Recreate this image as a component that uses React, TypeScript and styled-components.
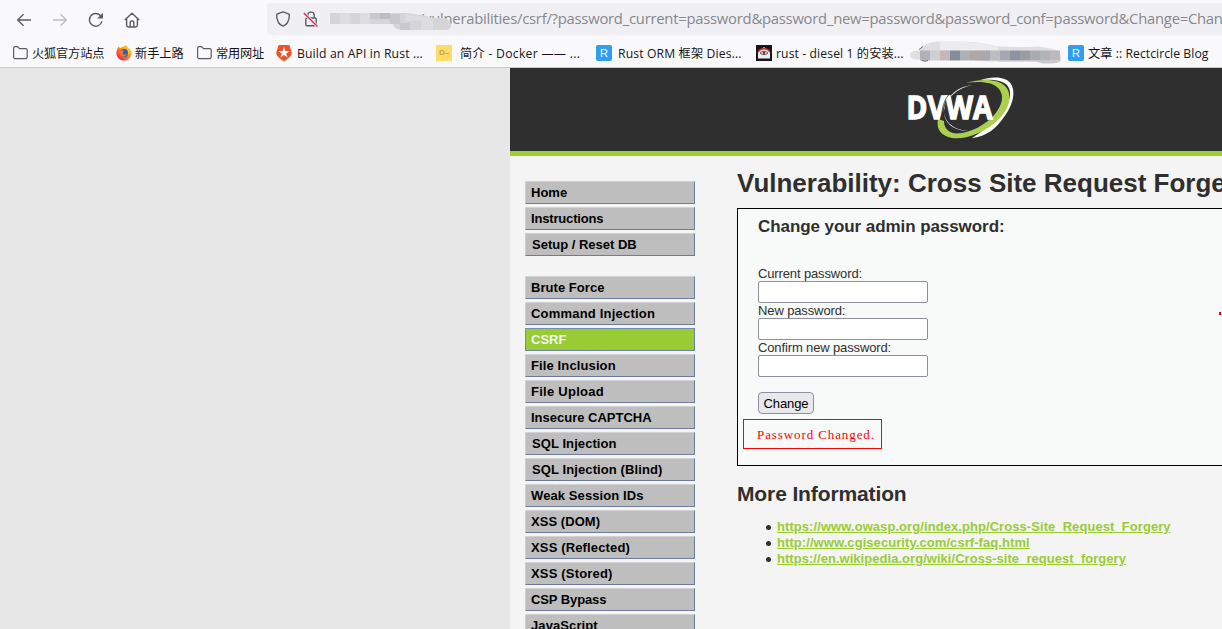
import React from "react";
import styled, { createGlobalStyle } from "styled-components";

const GlobalStyle = createGlobalStyle`
  *, *::before, *::after { box-sizing: border-box; }
  html, body { margin: 0; padding: 0; overflow: hidden; }
  body { font-family: "Liberation Sans", Arial, sans-serif; font-size: 13px; color: #2f2f2f; background: #e7e7e7; }
`;

const Window = styled.div`
  width: 1222px;
  height: 629px;
  display: flex;
  flex-direction: column;
  overflow: hidden;
`;

const Chrome = styled.header`
  height: 68px;
  flex: none;
  background: #f9f9fb;
  border-bottom: 1px solid #cccccf;
`;

const Toolbar = styled.div`
  height: 38px;
  display: flex;
  align-items: center;
`;

const NavIcons = styled.div`
  width: 267px;
  flex: none;
  display: flex;
  align-items: center;
  gap: 20px;
  padding: 1px 0 0 16px;
`;

const AddressBar = styled.div`
  flex: 1;
  height: 32px;
  display: flex;
  align-items: center;
  padding-left: 8px;
  gap: 12px;
  background: #f0f0f4;
  border-radius: 4px 0 0 4px;
  overflow: hidden;
`;

const Address = styled.div`
  position: relative;
  display: flex;
  padding: 0 0 2px 81px;
  font: 14.8px/20px "Open Sans", "Noto Sans", sans-serif;
  letter-spacing: -0.235px;
  color: #87878c;
  white-space: nowrap;
`;

const AddressMask = styled.svg`
  position: absolute;
  left: -4px;
  top: 1px;
`;

const Bookmarks = styled.nav`
  display: flex;
  height: 29px;
  padding-left: 12px;
`;

const Bookmark = styled.div<{ $width: number; $gap: number }>`
  width: ${(p) => p.$width}px;
  flex: none;
  display: flex;
  align-items: center;
  gap: ${(p) => p.$gap}px;
`;

const BookmarkLabel = styled.span<{ $spacing: number }>`
  padding-top: 2px;
  font: 12.2px/18px "Open Sans", "Noto Sans CJK SC", sans-serif;
  letter-spacing: ${(p) => p.$spacing}px;
  color: #15141a;
  white-space: nowrap;
`;

const LetterBadge = styled.span<{ $bg: string; $fg: string; $size: number; $radius: number }>`
  width: 16px;
  height: 16px;
  flex: none;
  display: flex;
  align-items: center;
  justify-content: center;
  border-radius: ${(p) => p.$radius}px;
  background: ${(p) => p.$bg};
  color: ${(p) => p.$fg};
  font-size: ${(p) => p.$size}px;
  line-height: 16px;
`;

const Icon = styled.svg`
  display: block;
  flex: none;
`;

const Page = styled.div`
  flex: 1;
  min-height: 0;
  margin-left: 510px;
  display: flex;
  flex-direction: column;
  background: #f4f4f4;
  overflow: hidden;
`;

const Banner = styled.div`
  height: 88px;
  flex: none;
  padding: 8px 0 0 396px;
  background: #2f2f2f;
  border-bottom: 5px solid #a1cc33;
`;

const Columns = styled.div`
  display: flex;
  flex: 1;
  min-height: 0;
`;

const Sidebar = styled.aside`
  width: 227px;
  flex: none;
  padding: 25px 0 0 15px;
  display: flex;
  flex-direction: column;
  gap: 20px;
`;

const MenuGroup = styled.ul`
  margin: 0;
  padding: 0;
  list-style: none;
  display: flex;
  flex-direction: column;
  gap: 3px;
`;

const MenuItem = styled.li<{ $active: boolean; $indent: number; $spacing: number }>`
  width: 170px;
  height: 23px;
  padding-left: ${(p) => 5 + p.$indent}px;
  border: 1px solid;
  border-color: ${(p) => (p.$active ? "#6f8fb4 #6b82a4 #6b82a4 #6f8fb4" : "#d2d2d2 #6e7c9a #6e7c9a #cfcfcf")};
  background: ${(p) => (p.$active ? "#99cc33" : "#bebebe")};
  color: ${(p) => (p.$active ? "#f4f4f4" : "#000")};
  font-weight: bold;
  font-size: 13px;
  line-height: 21px;
  letter-spacing: ${(p) => p.$spacing}px;
  white-space: nowrap;
`;

const Main = styled.main`
  width: 700px;
  flex: none;
`;

const Title = styled.h1`
  margin: 11px 0 0;
  height: 41px;
  font-size: 26px;
  line-height: 32px;
  white-space: nowrap;
`;

const Panel = styled.section`
  height: 258px;
  border: 1px solid #000;
  background: #f8faf9;
  padding: 8px 0 0 5px;
`;

const PanelBody = styled.div`
  position: relative;
`;

const Form = styled.form`
  padding-left: 15px;
  display: flex;
  flex-direction: column;
  align-items: flex-start;
`;

const PanelTitle = styled.h3`
  margin: 0 0 29px;
  font-size: 17px;
  line-height: 20px;
  letter-spacing: -0.07px;
`;

const FieldLabel = styled.label<{ $spacing: number }>`
  height: 15px;
  font-size: 13px;
  line-height: 15px;
  letter-spacing: ${(p) => p.$spacing}px;
`;

const Field = styled.input`
  display: block;
  width: 170px;
  height: 22px;
  padding: 0 4px;
  border: 1px solid #8f8f9d;
  border-radius: 2px;
  background: #fff;
`;

const SubmitButton = styled.button`
  margin-top: 15px;
  width: 56px;
  height: 22px;
  padding: 1px 0 0;
  border: 1px solid #8f8f9d;
  border-radius: 4px;
  background: #e9e9ed;
  color: #000;
  font: 13px/19px "Liberation Sans", Arial, sans-serif;
  letter-spacing: -0.1px;
`;

const Notice = styled.div`
  width: 139px;
  height: 30px;
  margin-top: 5px;
  padding-left: 13px;
  border: 1px solid #f00;
  color: #f00;
  font: 13px/30px "Liberation Serif", serif;
  letter-spacing: 0.9px;
  white-space: nowrap;
`;

const RedMark = styled.span`
  position: absolute;
  left: 476px;
  top: 95px;
  width: 2px;
  height: 3px;
  background: #f00000;
`;

const Subtitle = styled.h2`
  margin: 15px 0 12px;
  font-size: 21px;
  line-height: 26px;
  letter-spacing: -0.12px;
`;

const Links = styled.ul`
  margin: 0;
  padding: 0 0 0 29px;
  list-style: none;
  font-size: 13px;
  line-height: 16px;
`;

const LinkRow = styled.li`
  display: flex;
  align-items: center;
  gap: 6px;
  &::before {
    content: "";
    width: 5px;
    height: 5px;
    border-radius: 50%;
    background: #2f2f2f;
  }
`;

const Link = styled.a<{ $spacing: number }>`
  color: #99cc33;
  font-weight: bold;
  letter-spacing: ${(p) => p.$spacing}px;
  text-decoration: underline;
`;

const Folder = () => (
  <Icon width="16" height="16" viewBox="0 0 16 16" fill="none" stroke="#5b5b66" strokeWidth="1.2">
    <path d="M1.6 12V3.2Q1.6 1.7 3.1 1.7H5.6L7.6 3.6H13.6Q15.2 3.6 15.2 5.1V12Q15.2 13.6 13.6 13.6H3.1Q1.6 13.6 1.6 12Z" />
  </Icon>
);

const Firefox = () => (
  <Icon width="16" height="16" viewBox="0 0 16 16">
    <defs>
      <linearGradient id="fox" x1="1" y1="0" x2="0.15" y2="1">
        <stop offset="0" stopColor="#ffdc35" />
        <stop offset=".42" stopColor="#ff9a20" />
        <stop offset=".75" stopColor="#ff4a32" />
        <stop offset="1" stopColor="#ed1769" />
      </linearGradient>
    </defs>
    <path fill="url(#fox)" d="M1.8 3 3 1.3 3.6 3 5.5 2.4 7.3 1.6 9.8.3C10.5 2 13.2 2.8 14.7 5.3 16.8 10 13.4 15.6 8 15.6 3.6 15.6.4 12.2.4 8.2.4 6 1 4.4 1.8 3Z" />
    <circle cx="8.2" cy="8" r="4.1" fill="#2662b8" />
    <path fill="#ff7527" d="M3 5.8 6.3 5.3 8 6.6 6.6 8.2C7 10.5 9.4 9.5 10.7 9.1 9.5 12.4 5.5 12.6 3.7 9.5Z" />
    <path fill="#ffc22d" d="M9.8.3C9 2.6 13.7 5.4 11.4 10.2 16 8 14.6 4.3 9.8.3Z" />
  </Icon>
);

const Shield = () => (
  <Icon width="16" height="18" viewBox="0 0 16 18">
    <path fill="#eb5424" d="M2.7 1H13.3L15.7 8.2C16 12.3 11.5 15 8 17.2 4.5 15 0 12.3.3 8.2Z" />
    <path fill="#f9f9fb" d="M8 2.8 9.3 6.9H13.6L10.2 9.4 11.5 13.4 8 11 4.5 13.4 5.8 9.4 2.4 6.9H6.7Z" />
  </Icon>
);

const EyeMail = () => (
  <Icon width="16" height="16" viewBox="0 0 16 16">
    <rect width="16" height="16" fill="#17161b" />
    <path fill="#ececec" d="M2 7 8 2 14 7V13.5H2Z" />
    <path fill="none" stroke="#d02a29" strokeWidth="1.5" d="M2 7.3C4 2.4 12 2.4 14 7.3" />
    <path fill="#fff" stroke="#3b2c2c" strokeWidth=".8" d="M4 8Q8 4.2 12 8 8 11.2 4 8Z" />
    <circle cx="8" cy="7.8" r="1.4" fill="#a92525" />
  </Icon>
);

const MASK_COLORS = ["#c4b7b8", "#858c9a", "#adb0b6", "#afa7a8", "#a9a9ab", "#bdbdc3", "#a6a8b1", "#8f93a0", "#9b9ba2", "#a9acb1", "#b2b3b8", "#bdb9bb"];

const HiddenBookmark = () => (
  <Icon width="152" height="24" viewBox="0 0 152 24">
    <g transform="translate(0 -1.5)">
      <path fill="#dfdfe2" d="M10 10Q17 2 29 2L53 2C66 2 78 5 88 7Q108 8 130 7L145 10Q152 12 151 22H88Q69 22 60 20H8Q0 20 0 15 0 11 10 11Z" />
      <path fill="#ececef" d="M30 2H54C66 3 78 5 88 7.500V11H30Z" />
      <rect x="20" y="11" width="10" height="10" fill="#cfced4" />
      {MASK_COLORS.map((color, i) => (
        <rect key={i} x={30 + i * 10} y="11" width="10" height="10" fill={color} />
      ))}
      <rect x="10" y="11" width="10" height="10" fill="#b2b1ba" />
      <path fill="#c9c8ce" d="M88 21H150Q149 24 142 24H132L126 22H88Z" />
      <path fill="none" stroke="#44434a" strokeWidth=".8" d="M9 10 13 7M12 21Q15 22.500 18 21" />
    </g>
  </Icon>
);

const Logo = () => (
  <Icon width="110" height="64" viewBox="0 0 110 64">
    <path fill="#fff" d="M74 4C88-.5 101 1 105 8 110 16 107 29 98 41 90 53 79 61 66 62 76 56 88 46 97 35 105 24 106 15 101 9 96 4 87 3 74 4Z" />
    <path fill="#aad04d" d="M60 7C76 2 94 3 100 11 107 20 103 33 93 43 80 56 60 64 46 62 35 60 30 53 32 43L38 45C38 53 43 57 51 57.500 64 57 80 49 89 38 97 28 98 19 93 13 87 6 75 5 60 7Z" />
    <path fill="#fff" d="M66 9C51 12 41 22 38 32 36.500 44 46 54 63 55 48 55 38 47 38 36 39 22 50 11 66 9Z" />
    <g fill="#fff" stroke="#fff" strokeWidth="1.4" fontFamily="Open Sans, sans-serif" fontWeight="700" fontSize="32.500">
      <text x="0.5" y="43" textLength="86" lengthAdjust="spacingAndGlyphs">DVWA</text>
    </g>
    <path fill="none" stroke="#2f2f2f" strokeWidth=".7" d="M42.500 19C38 25 35.500 32 36 41" />
  </Icon>
);

type Item = { label: string; spacing?: number; indent?: number; active?: boolean };

const GROUPS: Item[][] = [
  [{ label: "Home" }, { label: "Instructions", spacing: -0.17 }, { label: "Setup / Reset DB", indent: 1 }],
  [
    { label: "Brute Force", spacing: 0.05 },
    { label: "Command Injection", spacing: 0.2 },
    { label: "CSRF", active: true },
    { label: "File Inclusion", spacing: 0.12 },
    { label: "File Upload", spacing: 0.26 },
    { label: "Insecure CAPTCHA" },
    { label: "SQL Injection", indent: 1, spacing: 0.08 },
    { label: "SQL Injection (Blind)", indent: 1, spacing: 0.1 },
    { label: "Weak Session IDs", spacing: 0.1 },
    { label: "XSS (DOM)", spacing: 0.05 },
    { label: "XSS (Reflected)", spacing: 0.15 },
    { label: "XSS (Stored)", spacing: 0.17 },
    { label: "CSP Bypass", spacing: -0.1 },
    { label: "JavaScript", spacing: 0.1 },
  ],
];

const BOOKMARKS: { icon: React.ReactNode; label: string; width: number; gap: number; spacing: number }[] = [
  { icon: <Folder />, label: "火狐官方站点", width: 104, gap: 4, spacing: -0.15 },
  { icon: <Firefox />, label: "新手上路", width: 80, gap: 3, spacing: 0 },
  { icon: <Folder />, label: "常用网址", width: 80, gap: 4, spacing: -0.15 },
  { icon: <Shield />, label: "Build an API in Rust ...", width: 160, gap: 5, spacing: 0.13 },
  { icon: <LetterBadge $bg="#ffdc67" $fg="#a48b36" $size={8} $radius={0}>D–</LetterBadge>, label: "简介 - Docker —— ...", width: 160, gap: 8, spacing: 0.28 },
  { icon: <LetterBadge $bg="#309df1" $fg="#fff" $size={11} $radius={2}>R</LetterBadge>, label: "Rust ORM 框架 Dies...", width: 160, gap: 6, spacing: 0.13 },
  { icon: <EyeMail />, label: "rust - diesel 1 的安装...", width: 154, gap: 4, spacing: 0.1 },
];

export default function App() {
  return (
    <Window>
      <GlobalStyle />
      <Chrome>
        <Toolbar>
          <NavIcons>
            <Icon width="16" height="16" viewBox="0 0 16 16" fill="none" stroke="#5b5b66" strokeWidth="1.4"><path d="M15 8H1.7M7.5 2.2 1.7 8 7.5 13.8" /></Icon>
            <Icon width="16" height="16" viewBox="0 0 16 16" fill="none" stroke="#bdbdc3" strokeWidth="1.4"><path d="M1 8H14.3M8.5 2.2 14.3 8 8.5 13.8" /></Icon>
            <Icon width="16" height="16" viewBox="0 0 16 16" fill="none" stroke="#5b5b66" strokeWidth="1.4"><path d="M13.8 9.3A6.3 6.3 0 1 1 12.8 4.2" /><path fill="#5b5b66" stroke="none" d="M9.2 6.5H15V.7Z" /></Icon>
            <Icon width="16" height="16" viewBox="0 0 16 16" fill="none" stroke="#5b5b66" strokeWidth="1.4" strokeLinejoin="round"><path d="M.8 8 8 1.2 15.2 8M2.6 6.5V13.3Q2.6 15 4.3 15H11.7Q13.4 15 13.4 13.3V6.5M6.2 15V10.5Q6.2 9 8 9T9.8 10.5V15" /></Icon>
          </NavIcons>
          <AddressBar>
            <Icon width="16" height="16" viewBox="0 0 16 16" fill="none" stroke="#5b5b66" strokeWidth="1.4"><path strokeLinejoin="round" d="M8 .9 14.2 3.2Q15 7.5 12.6 11.5 11 14 8 15.2 5 14 3.4 11.5 1 7.5 1.8 3.2Z" /></Icon>
            <Icon width="16" height="16" viewBox="0 0 16 16" fill="none" stroke="#5b5b66" strokeWidth="1.4"><rect x="2.8" y="7" width="10.4" height="7.8" rx="1.2" /><path d="M4.8 7V4.2Q4.8 1.1 8 1.1T11.2 4.2V7" /><path stroke="#f0f0f4" strokeWidth="3" d="M.8 2 14.5 15.5" /><path stroke="#e22850" d="M.8 2 14.5 15.5" /></Icon>
            <Address>
              <span>s/vulnerabilities/csrf/?password_current=password&amp;password_new=password&amp;password_conf=password&amp;Change=Chan</span>
              <AddressMask width="124" height="24" viewBox="0 0 124 24">
                <path fill="#d5d4d9" d="M3 4H80L94 6 108 9H118Q124 11 124 16 124 21 118 21H76Q67 21 66 15H3Z" />
                <path fill="#dddce1" d="M13 4H23V15H13ZM33 4H43V15H33ZM78 5 94 7 106 10V21H94V12H78Z" />
                <path fill="#bebdc4" d="M53 4H63V10H53Z" /><path fill="#c9c8ce" d="M43 4H53V10H43ZM63 5H73V15H63ZM73 14H83V21H73Z" />
              </AddressMask>
            </Address>
          </AddressBar>
        </Toolbar>
        <Bookmarks>
          {BOOKMARKS.map((b) => (
            <Bookmark key={b.label} $width={b.width} $gap={b.gap}>
              {b.icon}
              <BookmarkLabel $spacing={b.spacing}>{b.label}</BookmarkLabel>
            </Bookmark>
          ))}
          <Bookmark $width={158} $gap={0}><HiddenBookmark /></Bookmark>
          <Bookmark $width={154} $gap={4}>
            <LetterBadge $bg="#309df1" $fg="#fff" $size={11} $radius={2}>R</LetterBadge>
            <BookmarkLabel $spacing={0.05}>文章 :: Rectcircle Blog</BookmarkLabel>
          </Bookmark>
        </Bookmarks>
      </Chrome>
      <Page>
        <Banner><Logo /></Banner>
        <Columns>
          <Sidebar>
            {GROUPS.map((group, i) => (
              <MenuGroup key={i}>
                {group.map((item) => (
                  <MenuItem key={item.label} $active={!!item.active} $indent={item.indent ?? 0} $spacing={item.spacing ?? 0}>{item.label}</MenuItem>
                ))}
              </MenuGroup>
            ))}
          </Sidebar>
          <Main>
            <Title>Vulnerability: Cross Site Request Forgery (CSRF)</Title>
            <Panel>
              <PanelBody>
                <Form>
                  <PanelTitle>Change your admin password:</PanelTitle>
                  <FieldLabel $spacing={-0.13}>Current password:</FieldLabel>
                  <Field type="password" />
                  <FieldLabel $spacing={-0.12}>New password:</FieldLabel>
                  <Field type="password" />
                  <FieldLabel $spacing={-0.13}>Confirm new password:</FieldLabel>
                  <Field type="password" />
                  <SubmitButton type="button">Change</SubmitButton>
                </Form>
                <Notice>Password Changed.</Notice>
                <RedMark />
              </PanelBody>
            </Panel>
            <Subtitle>More Information</Subtitle>
            <Links>
              <LinkRow><Link $spacing={0.07}>https://www.owasp.org/index.php/Cross-Site_Request_Forgery</Link></LinkRow>
              <LinkRow><Link $spacing={0.07}>http://www.cgisecurity.com/csrf-faq.html</Link></LinkRow>
              <LinkRow><Link $spacing={0.04}>https://en.wikipedia.org/wiki/Cross-site_request_forgery</Link></LinkRow>
            </Links>
          </Main>
        </Columns>
      </Page>
    </Window>
  );
}
